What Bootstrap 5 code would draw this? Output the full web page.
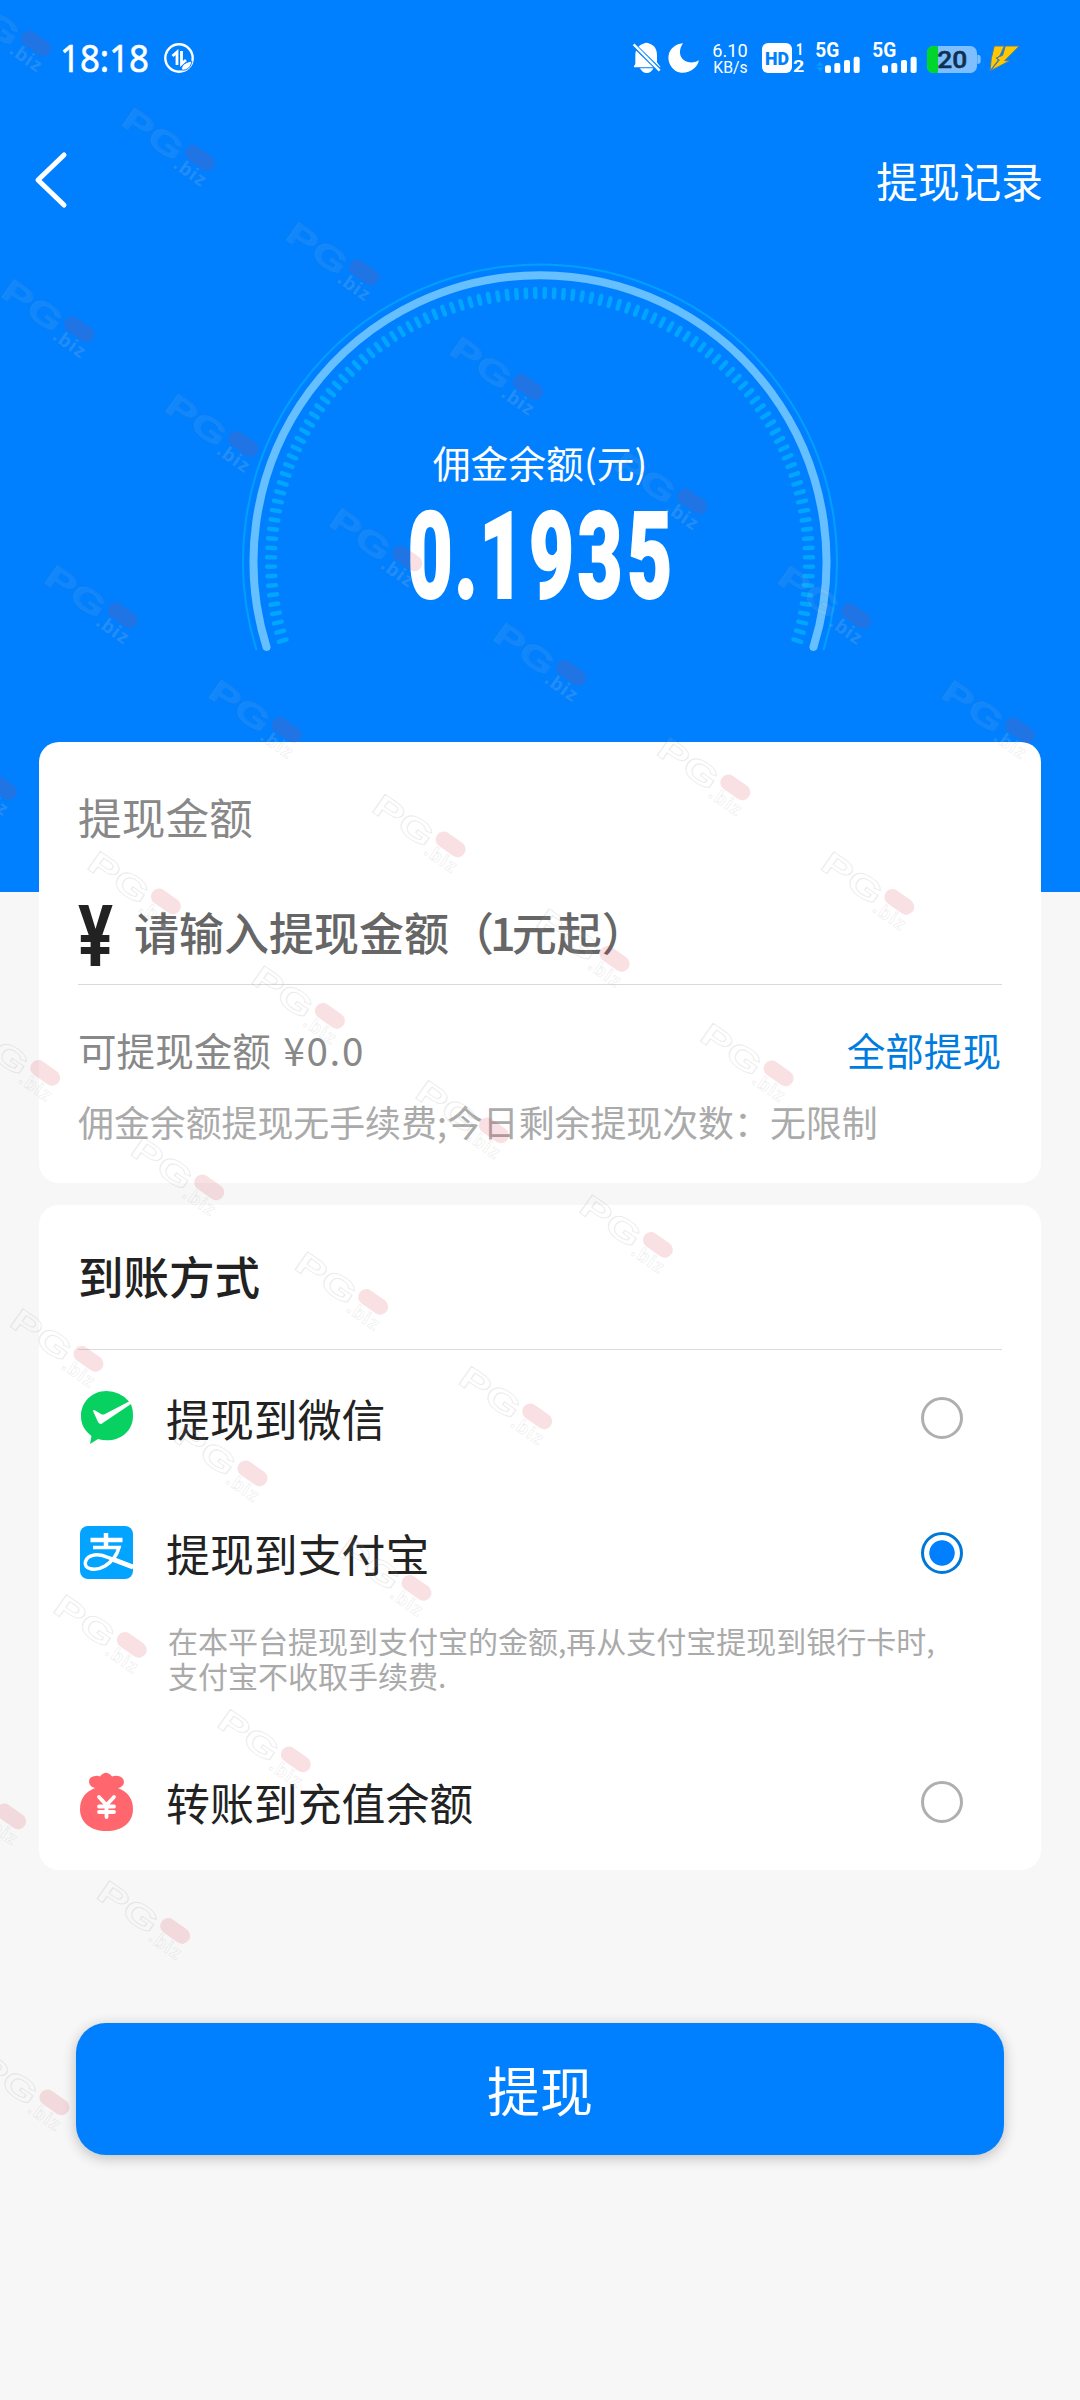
<!DOCTYPE html>
<html lang="zh-CN">
<head>
<meta charset="utf-8">
<meta name="viewport" content="width=device-width, initial-scale=1">
<title>提现</title>
<link rel="stylesheet" href="https://cdn.jsdelivr.net/npm/bootstrap@5.3.0/dist/css/bootstrap.min.css">
<style>
  body { width: 1080px; height: 2400px; background: #f7f7f7; color: #222; overflow: hidden; font-family: "Noto Sans CJK SC", "Noto Sans", sans-serif; }
  svg { display: block; flex: none; overflow: visible; }
  .hero { height: 892px; background: #0080ff; color: #fff; }
  .status-bar { height: 80px; padding: 36px 57px 0 60px; }
  .clock { width: 104px; height: 44px; }
  .top-nav { height: 80px; margin-top: 60px; padding: 0 37px 0 33px; }
  .top-nav a { font-size: 41.7px; line-height: 80px; }
  .gauge { width: 620px; height: 410px; margin: 40px auto 0; }
  .panel { width: 1002px; margin: 0 39px; padding: 0 39px 0 39px; background: #fff; border-radius: 20px; }
  .amount-panel { height: 441px; margin-top: -150px; padding-top: 44px; }
  .amount-title { font-size: 43.7px; line-height: 60px; color: #888; }
  .amount-row { height: 139px; padding-top: 37px; border-bottom: 1px solid #d9d9d9; }
  .amount-hint { font-size: 45px; line-height: 60px; font-weight: 500; color: #666; margin: -4px 0 0 20px; }
  .amount-hint i { font-style: normal; letter-spacing: -4px; margin-left: -4px; }
  .available { height: 60px; margin-top: 34px; font-size: 38.6px; line-height: 60px; color: #888; }
  .available b { font-weight: 400; letter-spacing: 1.6px; margin-left: 4px; }
  .available a { color: #007cdf; margin-right: 1px; }
  .limits { font-size: 35.9px; line-height: 50px; color: #aaa; margin-top: 17px; }
  .method-panel { height: 665px; margin-top: 22px; }
  .method-title { height: 145px; font-size: 45.5px; line-height: 140px; font-weight: 500; border-bottom: 1px solid #dcdcdc; }
  .method { height: 135px; padding: 0 39px 0 2px; font-size: 43.9px; }
  .method .method-name { margin-left: 33px; line-height: 70px; }
  .method .form-check-input { width: 42px; height: 42px; margin: 0; border: 3px solid #afafaf; background: #fff; }
  .method .form-check-input:checked { border-color: #0078d8; background: radial-gradient(circle, #0080ff 12.3px, #fff 13.1px); }
  .method-note { height: 111px; margin: 3px 0 0 90px; font-size: 30px; line-height: 35px; color: #aaa; white-space: nowrap; }
  .submit { width: 928px; height: 132px; margin: 153px 76px 0; background: #0080ff; color: #fff; font-size: 53px; line-height: 1; border: 0; border-radius: 30px; box-shadow: 0 3px 14px rgba(0,0,0,.24); }
  .stamps { left: 0; top: 0; width: 1080px; height: 2400px; pointer-events: none; overflow: hidden; }
</style>
</head>
<body class="position-relative">

<header class="hero">
  <div class="status-bar d-flex justify-content-between">
    <div class="d-flex">
      <svg class="clock" viewBox="0 0 104 44"><text x="0" y="36" font-family="Noto Sans" font-size="38" fill="#fff" stroke="#fff" stroke-width=".6" textLength="89" lengthAdjust="spacingAndGlyphs">18:18</text></svg>
      <svg width="32" height="44" viewBox="0 0 32 44" fill="none" stroke="#fff">
        <circle cx="15" cy="22" r="13.700" stroke-width="2.400"/>
        <path d="M8.500 20L13 16V29M17.500 15V28L22 24" stroke-width="2.800"/>
        <path d="M17.500 34C17 28 23 26 28 25C27 31 23 35 17.500 34Z" fill="#fff" stroke="#0080ff" stroke-width="1"/>
      </svg>
    </div>
    <svg class="mt-1" width="393.300" height="36.700" viewBox="90 60 1180 110" font-family="Roboto, sans-serif" fill="#fff">
      <path d="M106 130V105C106 86 119 73 130 71Q139 65 149 71C164 76 171 88 171 106V127L182 142H102V137Q106 136 106 130ZM120 145H160Q154 159 140 159Q127 159 120 145Z"/>
      <path d="M99 73L180 152" stroke="#0080ff" stroke-width="14"/><path d="M101 73L179 152" stroke="#fff" stroke-width="7"/>
      <path d="M249 70C199 75 193 129 226 152C252 168 290 152 297 121C261 142 222 110 249 70Z"/>
      <text x="337" y="110" font-size="56" textLength="106" lengthAdjust="spacingAndGlyphs">6.10</text>
      <text x="340" y="158" font-size="48" textLength="103" lengthAdjust="spacingAndGlyphs">KB/s</text>
      <rect x="486" y="69" width="90" height="90" rx="18"/>
      <text x="495" y="134" font-size="56" font-weight="900" fill="#0080ff" textLength="72" lengthAdjust="spacingAndGlyphs">HD</text>
      <text x="588" y="104" font-size="50" font-weight="700" textLength="22" lengthAdjust="spacingAndGlyphs">1</text>
      <text x="579" y="157" font-size="50" font-weight="700" textLength="34" lengthAdjust="spacingAndGlyphs">2</text>
      <text x="646" y="110" font-size="58" font-weight="700" textLength="72" lengthAdjust="spacingAndGlyphs">5G</text>
      <path d="M649 137L660 126L671 137ZM649 142H671L660 155Z" fill="#009cff"/>
      <g id="bars"><rect x="675" y="136" width="18" height="23" rx="6"/><rect x="703" y="129" width="18" height="30" rx="6"/><rect x="732" y="120" width="18" height="39" rx="6"/><rect x="761" y="110" width="18" height="49" rx="6"/></g>
      <text x="817" y="110" font-size="58" font-weight="700" textLength="72" lengthAdjust="spacingAndGlyphs">5G</text>
      <use href="#bars" x="171"/>
      <rect x="981" y="78" width="150" height="81" rx="20" fill="#80bfff"/><path d="M1132 104Q1142 104 1142 112V124Q1142 132 1132 132Z" fill="#80bfff"/>
      <path d="M1001 78H1014V159H1001Q981 159 981 139V98Q981 78 1001 78Z" fill="#00d52b"/>
      <text x="1012" y="145" font-size="74" font-weight="500" fill="#10304f" stroke="#10304f" stroke-width="1.500" textLength="90" lengthAdjust="spacingAndGlyphs">20</text>
      <path d="M1183 78H1213L1201 105L1191 116L1196 119L1170 153L1174 115ZM1216 78H1258L1214 122L1230 122L1172 152L1198 120L1188 114L1208 106Z" fill="#ffc800" stroke="#477cb0" stroke-width="3"/>
    </svg>
  </div>

  <nav class="top-nav d-flex justify-content-between align-items-center">
    <a href="#" aria-label="返回"><svg width="36" height="56" viewBox="0 0 36 56"><path d="M31 3L5 28L31 53" fill="none" stroke="#fff" stroke-width="5" stroke-linecap="round" stroke-linejoin="round"/></svg></a>
    <a href="#" class="text-white text-decoration-none">提现记录</a>
  </nav>

  <svg class="gauge" viewBox="230 260 620 410">
    <path d="M256.500 650A297 297 0 1 1 823.500 650" fill="none" stroke="#00a0ff" stroke-width="2"/>
    <path d="M266.500 647A286.500 286.500 0 1 1 813.500 647" fill="none" stroke="#66bfff" stroke-width="8" stroke-linecap="round"/>
    <g id="ticks" stroke="#00a6ff" stroke-width="4.400" stroke-linecap="round"></g>
    <text x="540" y="478" text-anchor="middle" font-size="37.800" fill="#fff">佣金余额(元)</text>
    <text transform="translate(0 598) scale(.64 1)" text-anchor="middle" x="672.200 728.100 784 861.600 937.500 1015" font-family="Roboto, sans-serif" font-weight="900" font-size="121" fill="#fff" stroke="#fff" stroke-width="2">0.1935</text>
  </svg>
</header>

<main>
  <section class="panel amount-panel">
    <div class="amount-title">提现金额</div>
    <div class="amount-row d-flex align-items-center">
      <svg width="36" height="62" viewBox="0 0 36 62"><text x="0" y="63" font-family="Roboto, sans-serif" font-weight="700" font-size="86" fill="#222" textLength="35" lengthAdjust="spacingAndGlyphs">¥</text></svg>
      <span class="amount-hint">请输入提现金额（<i>1</i>元起）</span>
    </div>
    <div class="available d-flex justify-content-between">
      <span>可提现金额 <b>¥0.0</b></span>
      <a href="#" class="text-decoration-none">全部提现</a>
    </div>
    <div class="limits">佣金余额提现无手续费;今日剩余提现次数：无限制</div>
  </section>

  <section class="panel method-panel">
    <div class="method-title">到账方式</div>
    <label class="method d-flex align-items-center">
      <svg width="53" height="53" viewBox="0 0 53 53"><path d="M26.500 0C12 0 1 11 1 25C1 34 5 40 11.500 45L10 53L18 48C34 53 53 44 53 25Q53 18 51 13L22 32.500Q20 34 18 31L13 20Q13 18 16 20L21 23Q23 24 25 23L49 10.500Q40 0 26.500 0Z" fill="#07d160"/></svg>
      <span class="method-name">提现到微信</span>
      <input class="form-check-input ms-auto" type="radio" name="method">
    </label>
    <label class="method d-flex align-items-center">
      <svg width="53" height="53" viewBox="0 0 53 53"><rect width="53" height="53" rx="8" fill="#02a4ff"/><g fill="none" stroke="#fff"><path d="M26 7V21M10.500 14H42.500" stroke-width="4.500"/><path d="M13 21.500H39Q36 33 25 40C15 46 3 43 5.500 35.500C8 28 19 27 28 31.500L53 41" stroke-width="3.500"/><path d="M32 33L53 41" stroke-width="5"/></g></svg>
      <span class="method-name">提现到支付宝</span>
      <input class="form-check-input ms-auto" type="radio" name="method" checked>
    </label>
    <div class="method-note">在本平台提现到支付宝的金额,再从支付宝提现到银行卡时,<br>支付宝不收取手续费.</div>
    <label class="method d-flex align-items-center">
      <svg width="53" height="58" viewBox="0 0 53 58"><path d="M15 15C8 14 7 5 13 3.500Q17 2 20 3.500Q26-4 32 3.500Q36 2 40 3.500C46 6 45 14 38 15Q53 21 53 36C53 50 42 58 26.500 58S0 50 0 36Q0 21 15 15Z" fill="#ff666d"/><path d="M19 24L26.500 32L34 24M19 33.500H34M19 39H34M26.500 32V44" fill="none" stroke="#fff" stroke-width="3.800" stroke-linecap="round"/></svg>
      <span class="method-name">转账到充值余额</span>
      <input class="form-check-input ms-auto" type="radio" name="method">
    </label>
  </section>

  <button type="button" class="btn submit d-flex align-items-center justify-content-center">提现</button>
</main>

<svg class="stamps position-absolute" viewBox="0 0 1080 2400" aria-hidden="true">
  <defs>
    <g id="stamp">
      <text x="-18" y="12" font-family="Liberation Sans, sans-serif" font-weight="700" font-size="32" fill="#fff" fill-opacity=".07" stroke="#888" stroke-opacity=".16" stroke-width="1" textLength="67" lengthAdjust="spacingAndGlyphs">PG</text>
      <rect x="51" y="-14.500" width="33" height="16" rx="8" fill="#d83040" fill-opacity=".15"/>
      <text x="50" y="17" font-family="Liberation Sans, sans-serif" font-weight="700" font-size="19" fill="#fff" fill-opacity=".12" stroke="#888" stroke-opacity=".14" stroke-width=".8" textLength="35">.biz</text>
    </g>
  </defs>
  <g id="stampLayer"></g>
</svg>

<script src="https://cdn.jsdelivr.net/npm/bootstrap@5.3.0/dist/js/bootstrap.bundle.min.js"></script>
<script>
  // gauge ticks: one every two degrees
  let ticks = '';
  for (let a = -107; a <= 107; a += 2) {
    ticks += `<path d="M540 289V297" transform="rotate(${a} 540 562)"/>`;
  }
  document.getElementById('ticks').innerHTML = ticks;

  // slanted lattice of stamps
  let stamps = '';
  for (let r = 0; r < 9; r++) {
    for (let k = 0; k < 7; k++) {
      const x = 961 - r * 120.7 - k * 164, y = 697 + r * 171.5 - k * 114.5;
      if (x > -90) stamps += `<use href="#stamp" transform="translate(${x} ${y}) rotate(35)"/>`;
    }
  }
  document.getElementById('stampLayer').innerHTML = stamps;
</script>
</body>
</html>
